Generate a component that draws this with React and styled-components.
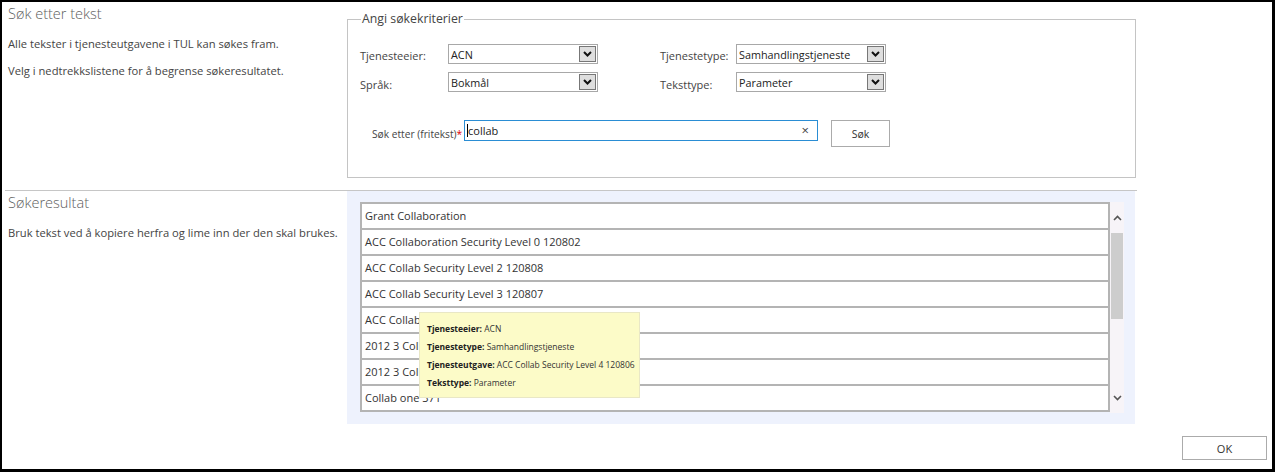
import React from 'react';
import styled, { createGlobalStyle } from 'styled-components';

const GlobalStyle = createGlobalStyle`
	html, body {
		margin: 0;
		padding: 0;
		background: #fff;
	}
	body {
		font-family: 'Open Sans', 'Noto Sans', sans-serif;
		color: #444;
	}
`;

const Frame = styled.div`
	box-sizing: border-box;
	width: 1275px;
	height: 472px;
	border-style: solid;
	border-color: #000;
	border-width: 2px 3px 3px 2px;
	display: flex;
	flex-direction: column;
`;

const Section = styled.div`
	display: flex;
	height: ${(p) => p.height}px;
`;

const InfoCol = styled.div`
	width: 345px;
	box-sizing: border-box;
	padding: ${(p) => p.top}px 6px 0 6px;
`;

const Title = styled.div`
	font-size: 14.5px;
	font-weight: 300;
	color: #5e5e5e;
	line-height: 18px;
	margin-bottom: 12px;
`;

const Info = styled.p`
	margin: 0 0 9px 0;
	font-size: 11.2px;
	line-height: 18px;
	color: #444;
	white-space: nowrap;
`;

const Fieldset = styled.fieldset`
	box-sizing: border-box;
	width: 789px;
	height: 165px;
	margin: 11px 0 0 0;
	padding: 19px 12px 0 12px;
	border: 1px solid #c4c4c4;
	min-width: 0;
`;

const Legend = styled.legend`
	padding: 0 1px;
	margin-left: 1px;
	font-size: 12.3px;
	line-height: 12px;
	color: #444;
`;

const CriteriaGrid = styled.div`
	display: grid;
	grid-template-columns: 88px 150px 62px 76px 150px;
	grid-auto-rows: 20px;
	row-gap: 8px;
	align-items: center;
`;

const Label = styled.label`
	font-size: 11px;
	color: #444;
	white-space: nowrap;
	padding-top: ${(p) => (p.low ? 4 : 2)}px;
`;

const SelectBox = styled.div`
	box-sizing: border-box;
	height: 20px;
	border: 1px solid #a8a8a8;
	display: flex;
	align-items: center;
	justify-content: space-between;
	background: #fff;
	padding-left: 2px;
	font-size: 10.8px;
	color: #222;
`;

const ArrowBtn = styled.span`
	box-sizing: border-box;
	width: 17px;
	height: 16px;
	margin-right: 1px;
	background: #dedede;
	border: 1px solid #777;
	display: flex;
	align-items: center;
	justify-content: center;
`;

const SearchRow = styled.div`
	display: flex;
	align-items: flex-start;
	margin-top: 28px;
	padding-left: 12px;
`;

const SearchLabel = styled.label`
	width: 92px;
	font-size: 10.2px;
	color: #444;
	white-space: nowrap;
	padding-top: 7px;
`;

const Required = styled.span`
	color: #d00;
`;

const SearchInput = styled.div`
	box-sizing: border-box;
	width: 354px;
	height: 21px;
	border: 1px solid #2a8dd4;
	display: flex;
	align-items: center;
	padding: 0 8px 0 2px;
	font-size: 11px;
	color: #222;
`;

const Caret = styled.span`
	width: 1px;
	height: 13px;
	background: #000;
`;

const InputText = styled.span`
	flex: 1;
`;

const ClearX = styled.span`
	font-size: 13px;
	color: #444;
	line-height: 1;
`;

const Button = styled.button`
	box-sizing: border-box;
	width: ${(p) => p.w}px;
	height: ${(p) => p.h}px;
	margin-left: ${(p) => p.ml || 0}px;
	background: #fff;
	border: 1px solid #ababab;
	font-family: inherit;
	font-size: ${(p) => p.fs || 10.5}px;
	color: #333;
	padding: 0;
`;

const Divider = styled.div`
	height: 1px;
	background: #c6c6c6;
	margin: 0 135px 0 3px;
`;

const ResultPanel = styled.div`
	position: relative;
	box-sizing: border-box;
	width: 788px;
	height: 233px;
	background: #eef2fd;
	padding: 11px 0 0 13px;
	display: flex;
`;

const List = styled.div`
	width: 750px;
	height: 210px;
	box-sizing: border-box;
	border-top: 2px solid #b4b4b4;
	border-left: 2px solid #b4b4b4;
	overflow: hidden;
	background: #fff;
`;

const Row = styled.div`
	height: 24px;
	line-height: 24px;
	border-bottom: 2px solid #b4b4b4;
	border-right: 2px solid #b4b4b4;
	padding-left: 3px;
	font-size: 11px;
	color: #333;
	white-space: nowrap;
`;

const Scrollbar = styled.div`
	width: 14px;
	height: 211px;
	background: #f7f4f8;
	display: flex;
	flex-direction: column;
	align-items: center;
`;

const ScrollArrow = styled.div`
	height: ${(p) => p.h}px;
	display: flex;
	align-items: center;
	justify-content: center;
`;

const Thumb = styled.div`
	width: 12px;
	height: 86px;
	background: #cdcdcd;
`;

const Spacer = styled.div`
	flex: 1;
`;

const Tooltip = styled.div`
	position: absolute;
	left: 72px;
	top: 121px;
	box-sizing: border-box;
	width: 221px;
	height: 86px;
	background: #fcfbc8;
	border: 1px solid #e9e7c6;
	padding: 7px 0 0 7px;
	font-size: 8.5px;
	color: #333;
`;

const TipLine = styled.div`
	line-height: 18px;
	white-space: nowrap;
	b {
		font-weight: 700;
		color: #222;
	}
`;

const Footer = styled.div`
	display: flex;
	justify-content: flex-end;
	padding: 12px 5px 0 0;
`;

const Chevron = ({ up, w = 9, h = 6, stroke = '#111', sw = 1.8 }) => (
	<svg width={w} height={h} viewBox="0 0 9 6">
		<polyline
			points={up ? '1,5 4.5,1.5 8,5' : '1,1 4.5,4.5 8,1'}
			fill="none"
			stroke={stroke}
			strokeWidth={sw}
		/>
	</svg>
);

const Select = ({ value }) => (
	<SelectBox>
		<span>{value}</span>
		<ArrowBtn>
			<Chevron w={9} h={6} sw={2} />
		</ArrowBtn>
	</SelectBox>
);

const rows = [
	'Grant Collaboration',
	'ACC Collaboration Security Level 0 120802',
	'ACC Collab Security Level 2 120808',
	'ACC Collab Security Level 3 120807',
	'ACC Collab Security Level 4 120806',
	'2012 3 Collab Security Level 1',
	'2012 3 Collab Security Level 2',
	'Collab one 371',
];

export default function App() {
	return (
		<>
			<GlobalStyle />
			<Frame>
				<Section height={188}>
					<InfoCol top={3}>
						<Title>Søk etter tekst</Title>
						<Info>Alle tekster i tjenesteutgavene i TUL kan søkes fram.</Info>
						<Info>Velg i nedtrekkslistene for å begrense søkeresultatet.</Info>
					</InfoCol>
					<Fieldset>
						<Legend>Angi søkekriterier</Legend>
						<CriteriaGrid>
							<Label>Tjenesteeier:</Label>
							<Select value="ACN" />
							<span />
							<Label>Tjenestetype:</Label>
							<Select value="Samhandlingstjeneste" />
							<Label low>Språk:</Label>
							<Select value="Bokmål" />
							<span />
							<Label low>Teksttype:</Label>
							<Select value="Parameter" />
						</CriteriaGrid>
						<SearchRow>
							<SearchLabel>
								Søk etter (fritekst)<Required>*</Required>
							</SearchLabel>
							<SearchInput>
								<Caret />
								<InputText>collab</InputText>
								<ClearX>×</ClearX>
							</SearchInput>
							<Button w={59} h={27} ml={13}>
								Søk
							</Button>
						</SearchRow>
					</Fieldset>
				</Section>
				<Divider />
				<Section height={233}>
					<InfoCol top={3}>
						<Title>Søkeresultat</Title>
						<Info>Bruk tekst ved å kopiere herfra og lime inn der den skal brukes.</Info>
					</InfoCol>
					<ResultPanel>
						<List>
							{rows.map((r) => (
								<Row key={r}>{r}</Row>
							))}
						</List>
						<Scrollbar>
							<ScrollArrow h={31}>
								<Chevron up w={9} h={6} stroke="#555" sw={1.6} />
							</ScrollArrow>
							<Thumb />
							<Spacer />
							<ScrollArrow h={30}>
								<Chevron w={9} h={6} stroke="#555" sw={1.6} />
							</ScrollArrow>
						</Scrollbar>
						<Tooltip>
							<TipLine>
								<b>Tjenesteeier:</b> ACN
							</TipLine>
							<TipLine>
								<b>Tjenestetype:</b> Samhandlingstjeneste
							</TipLine>
							<TipLine>
								<b>Tjenesteutgave:</b> ACC Collab Security Level 4 120806
							</TipLine>
							<TipLine>
								<b>Teksttype:</b> Parameter
							</TipLine>
						</Tooltip>
					</ResultPanel>
				</Section>
				<Footer>
					<Button w={85} h={24} fs={11}>
						OK
					</Button>
				</Footer>
			</Frame>
		</>
	);
}
